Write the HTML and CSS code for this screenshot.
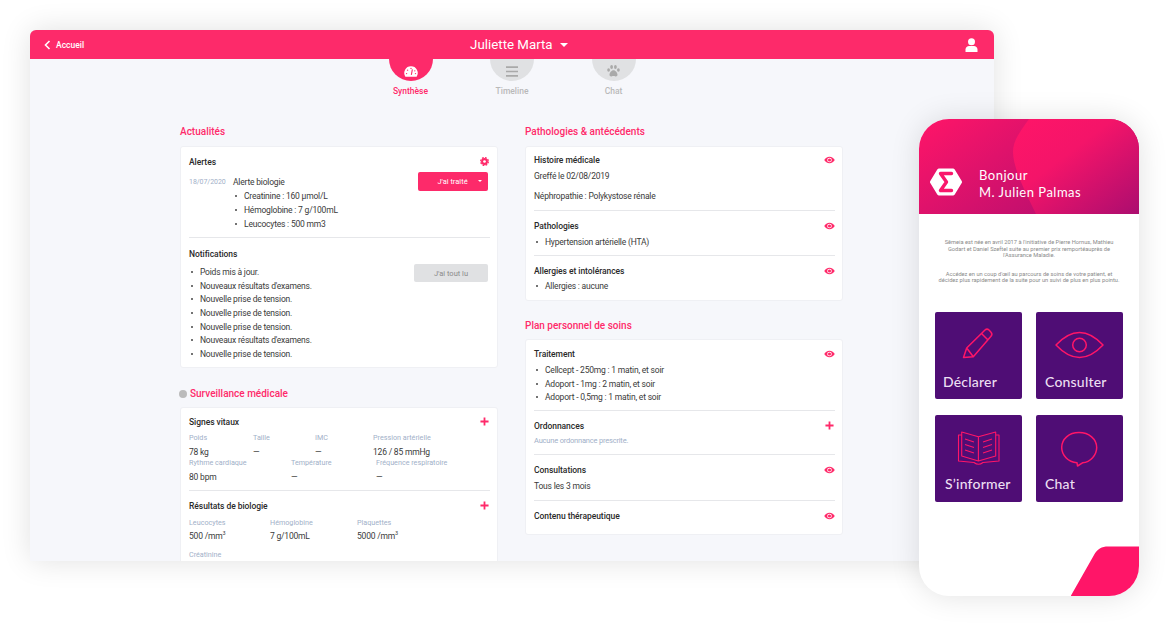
FILE: index.html
```html
<!DOCTYPE html>
<html lang="fr">
<head>
    <meta charset="UTF-8">
    <meta name="viewport" content="width=device-width, initial-scale=1.0">
    <title>Juliette Marta</title>
    <link rel="stylesheet" href="styles.css">
</head>
<body>
    <svg class="sprite" width="0" height="0">
        <symbol id="i-eye" viewBox="0 0 24 16">
            <path fill="#ff2a6a" d="M12 1C7 1 2.800 3.800.5 8 2.800 12.200 7 15 12 15s9.200-2.800 11.500-7C21.200 3.800 17 1 12 1z"/>
            <circle cx="12" cy="8" r="5" fill="#fff"/>
            <circle cx="12" cy="8" r="3.400" fill="#ff2a6a"/>
        </symbol>
        <symbol id="i-plus" viewBox="0 0 10 10">
            <path d="M5 .5v9M.5 5h9" stroke="#ff2a6a" stroke-width="2" fill="none"/>
        </symbol>
    </svg>

    <section class="window">
        <header class="topbar">
            <a class="back">
                <svg width="7" height="10" viewBox="0 0 7 10"><path d="M5.500 1L1.500 5l4 4" fill="none" stroke="#fff" stroke-width="1.600"/></svg>
                Accueil
            </a>
            <div class="patient">Juliette Marta <span class="caret"></span></div>
            <svg class="user" width="13" height="14" viewBox="0 0 13 14">
                <circle cx="6.500" cy="3.800" r="3.500" fill="#fff"/>
                <path d="M0.500 14v-2.500C.5 9.300 2.300 8 4 8h5c1.700 0 3.500 1.300 3.500 3.500V14z" fill="#fff"/>
            </svg>
        </header>

        <nav class="tabs">
            <div class="tab tab-active">
                <div class="tab-circle">
                    <svg width="14" height="11" viewBox="0 0 20 16">
                        <path d="M10 .5A9.700 9.700 0 0 0 1.800 15.500h16.400A9.700 9.700 0 0 0 10 .5z" fill="#fff"/>
                        <path d="M10.500 13l1.500-8" stroke="#ff2a6a" stroke-width="1.600"/>
                        <circle cx="10" cy="3.500" r="1" fill="#ff2a6a"/>
                        <circle cx="5" cy="6" r="1" fill="#ff2a6a"/>
                        <circle cx="15.500" cy="7" r="1" fill="#ff2a6a"/>
                        <circle cx="3.500" cy="11" r="1" fill="#ff2a6a"/>
                        <circle cx="16.500" cy="11" r="1" fill="#ff2a6a"/>
                    </svg>
                </div>
                <span>Synthèse</span>
            </div>
            <div class="tab">
                <div class="tab-circle">
                    <svg width="12" height="11" viewBox="0 0 12 11"><path d="M0 1.200h12M0 5.500h12M0 9.800h12" stroke="#a9a9a9" stroke-width="1.700"/></svg>
                </div>
                <span>Timeline</span>
            </div>
            <div class="tab">
                <div class="tab-circle">
                    <svg width="13" height="12" viewBox="0 0 13 12" fill="#a9a9a9">
                        <ellipse cx="1.600" cy="5" rx="1.400" ry="1.800"/>
                        <ellipse cx="4.600" cy="2" rx="1.400" ry="1.900"/>
                        <ellipse cx="8.400" cy="2" rx="1.400" ry="1.900"/>
                        <ellipse cx="11.400" cy="5" rx="1.400" ry="1.800"/>
                        <path d="M6.500 5.200c-2 0-4 2.600-4 4.600 0 1.500 1.200 1.800 2 1.600.8-.2 1.300-.4 2-.4s1.200.2 2 .4c.8.200 2-.1 2-1.600 0-2-2-4.600-4-4.600z"/>
                    </svg>
                </div>
                <span>Chat</span>
            </div>
        </nav>

        <div class="columns">
            <div class="col">
                <h2 class="section-title">Actualités</h2>
                <div class="card">
                    <div class="block block-alerts">
                        <div class="block-head">
                            <h3>Alertes</h3>
                            <svg class="icon-gear" width="9" height="9" viewBox="0 0 10 10">
                                <circle cx="5" cy="5" r="3.800" fill="#ff2a6a"/>
                                <circle cx="5" cy="5" r="4.300" fill="none" stroke="#ff2a6a" stroke-width="1.400" stroke-dasharray="2 1.377"/>
                                <circle cx="5" cy="5" r="1.500" fill="#fff"/>
                            </svg>
                        </div>
                        <div class="alert">
                            <span class="alert-date">18/07/2020</span>
                            <div class="alert-body">
                                <div class="line">Alerte biologie</div>
                                <ul class="bullets">
                                    <li>Creatinine : 160 µmol/L</li>
                                    <li>Hémoglobine : 7 g/100mL</li>
                                    <li>Leucocytes : 500 mm3</li>
                                </ul>
                            </div>
                            <button class="btn btn-pink">J'ai traité <span class="btn-caret"></span></button>
                        </div>
                    </div>
                    <div class="block block-notifs">
                        <h3>Notifications</h3>
                        <div class="notifs">
                            <ul class="bullets bullets-tight">
                                <li>Poids mis à jour.</li>
                                <li>Nouveaux résultats d'examens.</li>
                                <li>Nouvelle prise de tension.</li>
                                <li>Nouvelle prise de tension.</li>
                                <li>Nouvelle prise de tension.</li>
                                <li>Nouveaux résultats d'examens.</li>
                                <li>Nouvelle prise de tension.</li>
                            </ul>
                            <button class="btn btn-grey">J'ai tout lu</button>
                        </div>
                    </div>
                </div>

                <h2 class="section-title section-next section-watch"><span class="dot"></span>Surveillance médicale</h2>
                <div class="card">
                    <div class="block block-vitals">
                        <div class="block-head">
                            <h3>Signes vitaux</h3>
                            <svg class="icon-plus"><use href="#i-plus"/></svg>
                        </div>
                        <div class="metrics metrics-a">
                            <div><label>Poids</label><p>78 kg</p></div>
                            <div><label>Taille</label><p>—</p></div>
                            <div><label>IMC</label><p>—</p></div>
                            <div><label>Pression artérielle</label><p>126 / 85 mmHg</p></div>
                        </div>
                        <div class="metrics metrics-b">
                            <div><label>Rythme cardiaque</label><p>80 bpm</p></div>
                            <div><label>Température</label><p>—</p></div>
                            <div><label>Fréquence respiratoire</label><p>—</p></div>
                        </div>
                    </div>
                    <div class="block block-bio">
                        <div class="block-head">
                            <h3>Résultats de biologie</h3>
                            <svg class="icon-plus"><use href="#i-plus"/></svg>
                        </div>
                        <div class="metrics metrics-c">
                            <div><label>Leucocytes</label><p>500 /mm<sup>3</sup></p></div>
                            <div><label>Hémoglobine</label><p>7 g/100mL</p></div>
                            <div><label>Plaquettes</label><p>5000 /mm<sup>3</sup></p></div>
                        </div>
                        <div class="metrics metrics-d">
                            <div><label>Créatinine</label></div>
                        </div>
                    </div>
                </div>
            </div>

            <div class="col">
                <h2 class="section-title">Pathologies &amp; antécédents</h2>
                <div class="card">
                    <div class="block block-history">
                        <div class="block-head">
                            <h3>Histoire médicale</h3>
                            <svg class="icon-eye"><use href="#i-eye"/></svg>
                        </div>
                        <div class="line line-first">Greffé le 02/08/2019</div>
                        <div class="line line-gap">Néphropathie : Polykystose rénale</div>
                    </div>
                    <div class="block">
                        <div class="block-head">
                            <h3>Pathologies</h3>
                            <svg class="icon-eye"><use href="#i-eye"/></svg>
                        </div>
                        <ul class="bullets bullets-right">
                            <li>Hypertension artérielle (HTA)</li>
                        </ul>
                    </div>
                    <div class="block block-last">
                        <div class="block-head">
                            <h3>Allergies et intolérances</h3>
                            <svg class="icon-eye"><use href="#i-eye"/></svg>
                        </div>
                        <ul class="bullets bullets-right">
                            <li>Allergies : aucune</li>
                        </ul>
                    </div>
                </div>

                <h2 class="section-title section-next">Plan personnel de soins</h2>
                <div class="card">
                    <div class="block block-treat">
                        <div class="block-head">
                            <h3>Traitement</h3>
                            <svg class="icon-eye"><use href="#i-eye"/></svg>
                        </div>
                        <ul class="bullets bullets-right bullets-tight">
                            <li>Cellcept - 250mg : 1 matin, et soir</li>
                            <li>Adoport - 1mg : 2 matin, et soir</li>
                            <li>Adoport - 0,5mg : 1 matin, et soir</li>
                        </ul>
                    </div>
                    <div class="block">
                        <div class="block-head">
                            <h3>Ordonnances</h3>
                            <svg class="icon-plus"><use href="#i-plus"/></svg>
                        </div>
                        <div class="line line-muted">Aucune ordonnance prescrite.</div>
                    </div>
                    <div class="block block-consult">
                        <div class="block-head">
                            <h3>Consultations</h3>
                            <svg class="icon-eye"><use href="#i-eye"/></svg>
                        </div>
                        <div class="line line-first">Tous les 3 mois</div>
                    </div>
                    <div class="block block-end">
                        <div class="block-head">
                            <h3>Contenu thérapeutique</h3>
                            <svg class="icon-eye"><use href="#i-eye"/></svg>
                        </div>
                    </div>
                </div>
            </div>
        </div>
    </section>

    <section class="phone">
        <header class="phone-head">
            <svg class="phone-wave" width="220" height="95" viewBox="0 0 220 95">
                <defs>
                    <linearGradient id="wave-a" x1="0" y1="0" x2="1" y2="0.600">
                        <stop offset="0" stop-color="#ff1568"/>
                        <stop offset="1" stop-color="#b50e6f"/>
                    </linearGradient>
                    <linearGradient id="wave-b" x1="0" y1="0" x2="1" y2="1">
                        <stop offset="0" stop-color="#ff1568"/>
                        <stop offset="0.400" stop-color="#f41469"/>
                        <stop offset="1" stop-color="#ab0d6f"/>
                    </linearGradient>
                </defs>
                <rect width="220" height="95" fill="url(#wave-a)"/>
                <path d="M110 0C100 14 94 22 94 33 94 50 108 76 117 95H220V0z" fill="url(#wave-b)"/>
            </svg>
            <svg class="phone-logo" width="32" height="28" viewBox="0 0 32 28">
                <path d="M9 2.500h14L30 14l-7 11.500H9L2 14z" fill="#fff" stroke="#fff" stroke-width="4" stroke-linejoin="round"/>
                <path d="M21.500 5.500H10.500L16.500 14l-6 8.500h11" fill="none" stroke="#f9176b" stroke-width="3.400" stroke-linejoin="round" stroke-linecap="round"/>
            </svg>
            <div class="phone-hello">Bonjour<br>M. Julien Palmas</div>
        </header>

        <div class="phone-intro">
            <p>Sêmeia est née en avril 2017 à l'initiative de Pierre Hornus, Mathieu Godart et Daniel Szeftel suite au premier prix remportéauprès de l'Assurance Maladie.</p>
            <p>Accédez en un coup d'œil au parcours de soins de votre patient, et décidez plus rapidement de la suite pour un suivi de plus en plus pointu.</p>
        </div>

        <div class="tiles">
            <div class="tile">
                <svg class="tile-icon" width="87" height="60" viewBox="0 0 87 60">
                    <path d="M28.500 45.500L31.700 36 50 18a3 3 0 0 1 4 0l2 2.200a3 3 0 0 1 0 4L38.300 44.700zM31.700 36l6.600 8.700M46.500 21.500l6.500 6.500"/>
                </svg>
                <span>Déclarer</span>
            </div>
            <div class="tile">
                <svg class="tile-icon" width="87" height="60" viewBox="0 0 87 60">
                    <path d="M20 33Q43.500 8 67 33 43.500 58 20 33z"/>
                    <circle cx="43.500" cy="33" r="6.800"/>
                </svg>
                <span>Consulter</span>
            </div>
            <div class="tile">
                <svg class="tile-icon tile-icon-thin" width="87" height="60" viewBox="0 0 87 60">
                    <path d="M26.700 17l16.700 4.700v24.300L26.700 41zM60.700 17l-17.300 4.700v24.300L60.700 41z"/>
                    <path d="M26.700 20H23.500V46L39 47.500Q43.500 51 48 47.500L64 46V20H60.700"/>
                    <path d="M30 24l9 3M30 29.500l9 3M30 35l9 3M57 24l-9 3M57 29.500l-9 3M57 35l-9 3"/>
                </svg>
                <span class="tile-inset">S’informer</span>
            </div>
            <div class="tile">
                <svg class="tile-icon" width="87" height="60" viewBox="0 0 87 60">
                    <path d="M43 17.500C33 17.500 25.700 24 25.700 32.500 25.700 40 32 47 41 47.700L41.500 51 46.500 47.800C54.500 47 60.700 40 60.700 32.500 60.700 24 53 17.500 43 17.500z"/>
                </svg>
                <span>Chat</span>
            </div>
        </div>

        <svg class="phone-corner" width="70" height="50" viewBox="0 0 70 50">
            <path d="M2 49.500L25 9C28 3 33 .5 39 .5H70V50H2z" fill="#ff1568"/>
        </svg>
    </section>
</body>
</html>
```

FILE: styles.css
```css
* {
    box-sizing: border-box;
}
body {
    margin: 0;
    width: 1169px;
    height: 626px;
    position: relative;
    overflow: hidden;
    background-color: #fff;
    font-family: Roboto, sans-serif;
    font-size: 8.500px;
    letter-spacing: -0.200px;
    color: #3a3a3a;
}
.sprite {
    position: absolute;
}
h2, h3, p, ul {
    margin: 0;
    padding: 0;
}

/* desktop window */
.window {
    position: absolute;
    left: 30px;
    top: 30px;
    width: 964px;
    height: 531px;
    overflow: hidden;
    background-color: #f6f7fb;
    border-radius: 6px 6px 0 0;
    box-shadow: 0 0 30px rgba(0, 0, 0, 0.12);
}
.topbar {
    height: 29px;
    display: flex;
    align-items: center;
    justify-content: space-between;
    padding: 0 16px 0 14px;
    background-color: #fd2a6a;
    color: #fff;
    position: relative;
    z-index: 1;
}
.back {
    display: flex;
    align-items: center;
    gap: 5px;
    font-size: 8.500px;
    font-weight: 500;
    letter-spacing: 0;
}
.patient {
    position: absolute;
    left: 14px;
    right: 0;
    text-align: center;
    font-size: 13.300px;
    letter-spacing: 0;
}
.caret {
    display: inline-block;
    margin-left: 4px;
    vertical-align: 2px;
    border-left: 4px solid transparent;
    border-right: 4px solid transparent;
    border-top: 4px solid #fff;
}

.tabs {
    display: flex;
    justify-content: center;
}
.tab {
    width: 101.500px;
    display: flex;
    flex-direction: column;
    align-items: center;
    font-size: 8.500px;
    font-weight: 500;
    line-height: 14px;
    letter-spacing: 0;
    color: #b9b9b9;
}
.tab-active {
    color: #ff2a6a;
}
.tab-circle {
    width: 44px;
    height: 22px;
    margin-bottom: 3px;
    border-radius: 0 0 22px 22px;
    background-color: #e0e1e3;
    display: flex;
    align-items: center;
    justify-content: center;
    padding-top: 2px;
}
.tab-active .tab-circle {
    background-color: #fd2a6a;
}

.columns {
    display: flex;
    gap: 27px;
    padding: 27px 0 0 150px;
}
.col {
    width: 318px;
}
.section-title {
    font-size: 10px;
    font-weight: 500;
    line-height: 14px;
    letter-spacing: 0;
    color: #ff2a6a;
    margin-bottom: 7px;
    display: flex;
    align-items: center;
}
.section-next {
    margin-top: 18px;
    margin-bottom: 6px;
}
.section-watch {
    margin-top: 19px;
}
.dot {
    width: 8px;
    height: 8px;
    border-radius: 50%;
    background-color: #bbb;
    margin-left: -1px;
    margin-right: 3px;
}
.card {
    background-color: #fff;
    border: 1px solid #eff0f4;
    border-radius: 3px;
    padding: 0 7px 0 8px;
}
.block {
    padding: 8px 0 6px;
    border-bottom: 1px solid #e6e7ea;
}
.block:last-child {
    border-bottom: none;
}
.block-head {
    display: flex;
    justify-content: space-between;
    align-items: center;
}
h3 {
    font-size: 8.500px;
    font-weight: 500;
    line-height: 14px;
    letter-spacing: -0.050px;
    color: #2a2a2a;
}
.icon-eye {
    width: 11px;
    height: 8px;
}
.icon-plus {
    width: 9px;
    height: 9px;
    margin-right: 1px;
}
.icon-gear {
    margin: 0 1px 1px 0;
}
.line {
    line-height: 14px;
}
.line-first {
    margin-top: 2px;
}
.line-gap {
    margin-top: 6px;
}
.line-muted {
    color: #9fb0c8;
    font-size: 7.500px;
    margin-top: 1px;
}
.bullets {
    list-style: none;
}
.bullets li {
    line-height: 14px;
    padding-left: 11px;
    position: relative;
}
.bullets li::before {
    content: "";
    position: absolute;
    left: 2px;
    top: 6px;
    width: 2px;
    height: 2px;
    border-radius: 50%;
    background-color: #444;
}
.bullets-tight li {
    height: 13.670px;
}
.bullets-right {
    margin-top: 2px;
}

/* alertes */
.block-alerts {
    padding: 8px 0 6px;
}
.alert {
    display: flex;
    margin-top: 6px;
}
.alert-date {
    width: 44px;
    line-height: 14px;
    font-size: 7px;
    letter-spacing: -0.050px;
    color: #9fb0c8;
}
.alert-body {
    flex: 1;
}
.btn {
    border: none;
    border-radius: 2px;
    font-family: inherit;
    font-size: 7.500px;
    height: 19px;
    padding: 0;
}
.btn-pink {
    width: 70px;
    margin-right: 2px;
    margin-top: -3px;
    background-color: #fd2a6a;
    color: #fff;
    position: relative;
    padding-right: 1px;
}
.btn-caret {
    position: absolute;
    right: 6px;
    top: 8px;
    border-left: 2.500px solid transparent;
    border-right: 2.500px solid transparent;
    border-top: 2.500px solid #fff;
}
.btn-grey {
    width: 74px;
    height: 18px;
    margin-right: 2px;
    margin-top: -1px;
    background-color: #e0e1e3;
    color: #8a8a8a;
}
.block-notifs {
    padding: 9px 0 6px;
}
.notifs {
    display: flex;
    justify-content: space-between;
    margin-top: 4px;
}

/* metrics */
.metrics {
    display: grid;
}
.metrics label {
    display: block;
    font-size: 7.200px;
    line-height: 11px;
    letter-spacing: 0;
    color: #9fb0c8;
}
.metrics p {
    line-height: 11px;
    margin-top: 4px;
}
.metrics sup {
    font-size: 5.500px;
    line-height: 0;
}
.metrics-a {
    grid-template-columns: 64px 62px 58px 1fr;
    margin-top: 3px;
}
.metrics-b {
    grid-template-columns: 102px 85px 1fr;
    margin-top: -1px;
}
.metrics-c {
    grid-template-columns: 81px 87px 1fr;
    margin-top: 4px;
}
.metrics-c p {
    margin-top: 3px;
}
.metrics-d {
    margin-top: 7px;
}
.block-vitals {
    padding: 7px 0;
}

/* right column */
.block-history {
    padding: 6px 0 7px;
}
.block-last {
    padding-bottom: 7px;
}
.block-last .bullets-right {
    margin-top: 1px;
}
.block-treat {
    padding-top: 7px;
}
.block-consult {
    padding-bottom: 7px;
}
.block-end {
    padding-bottom: 11px;
}

/* phone */
.phone {
    position: absolute;
    left: 919px;
    top: 119px;
    width: 220px;
    height: 477px;
    overflow: hidden;
    background-color: #fff;
    border-radius: 30px;
    box-shadow: 0 0 30px rgba(0, 0, 0, 0.12);
}
.phone-head {
    height: 95px;
    position: relative;
    display: flex;
    align-items: center;
    gap: 17px;
    padding: 0 0 0 11px;
    color: #fff;
}
.phone-wave {
    position: absolute;
    left: 0;
    top: 0;
}
.phone-logo, .phone-hello {
    position: relative;
    margin-top: 30px;
}
.phone-hello {
    margin-top: 35px;
    font-family: Lato, sans-serif;
    font-size: 13px;
    line-height: 17px;
    letter-spacing: 0.500px;
}
.phone-intro {
    padding: 25px 18px 0;
    text-align: center;
    font-size: 5.700px;
    line-height: 6.600px;
    letter-spacing: 0;
    color: #8a8a8a;
}
.phone-intro p + p {
    margin-top: 12px;
}
.tiles {
    display: grid;
    grid-template-columns: 87px 87px;
    gap: 16px 14px;
    padding: 28px 0 0 16px;
}
.tile {
    height: 87px;
    border-radius: 2px;
    background-color: #4f0d75;
    color: #ecdff2;
    font-family: Lato, sans-serif;
    font-size: 14px;
    font-weight: 500;
    letter-spacing: 0.200px;
}
.tile span {
    display: block;
    padding: 2px 0 0 8px;
    line-height: 16px;
}
.tile + .tile span {
    padding-left: 9px;
}
.tile:nth-child(n+3) span {
    padding-top: 1px;
}
.tile span.tile-inset {
    padding-left: 10px;
}
.tile-icon {
    display: block;
    fill: none;
    stroke: #ff1568;
    stroke-width: 1.500;
    stroke-linejoin: round;
}
.tile-icon-thin {
    stroke-width: 1.100;
}
.phone-corner {
    position: absolute;
    right: 0;
    bottom: 0;
}
```
